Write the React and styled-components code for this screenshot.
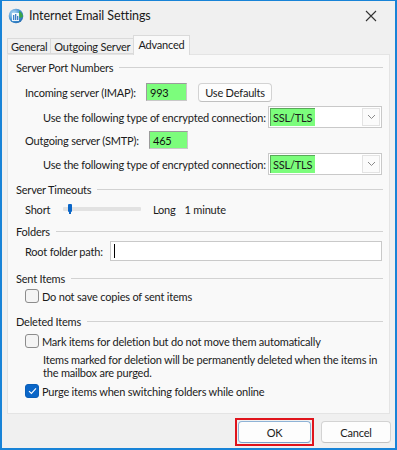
import React from "react";
import styled, { createGlobalStyle } from "styled-components";

const Global = createGlobalStyle`
  html, body { margin: 0; padding: 0; background: #f0f0f0; }
  body { font-family: Lato, "Noto Sans", sans-serif; font-size: 11px; letter-spacing: -0.2px; color: #1b1b1b; }
  * { box-sizing: border-box; }
`;

const Window = styled.div`
  width: 397px;
  height: 450px;
  background: #f0f0f0;
  border: 2px solid #1883d7;
  border-top-width: 1px;
  display: flex;
  flex-direction: column;
  position: relative;
`;

const TitleBar = styled.div`
  height: 29px;
  display: flex;
  align-items: center;
  padding: 0 0 0 6px;
  gap: 5px;
  font-size: 12.5px;
  letter-spacing: -0.1px;
  color: #1a1a1a;
`;

const TitleText = styled.span`
  flex: 1;
`;

const Close = styled.div`
  width: 40px;
  height: 29px;
  display: flex;
  align-items: center;
  justify-content: center;
  margin-right: 4px;
`;

const Tabs = styled.div`
  display: flex;
  align-items: flex-end;
  padding-left: 5px;
  height: 24px;
`;

const Tab = styled.div`
  height: ${p => (p.$active ? "20px" : "16px")};
  padding: 0 ${p => (p.$active ? "4px" : "3px")};
  display: flex;
  align-items: ${p => (p.$active ? "flex-start" : "center")};
  padding-top: ${p => (p.$active ? "2px" : "0")};
  background: ${p => (p.$active ? "#f9f9f9" : "#f0f0f0")};
  border: 1px solid #dadada;
  border-bottom: ${p => (p.$active ? "none" : "1px solid #dadada")};
  margin-right: ${p => (p.$active ? "0" : "-1px")};
  margin-bottom: ${p => (p.$active ? "-1px" : "0")};
  position: relative;
  z-index: ${p => (p.$active ? 2 : 1)};
  color: #1b1b1b;
  white-space: nowrap;
`;

const Panel = styled.div`
  margin: 0 5px 0 5px;
  height: 360px;
  background: #f9f9f9;
  border: 1px solid #e4e4e4;
  padding: 0 6px 0 8px;
  display: flex;
  flex-direction: column;
`;

const Row = styled.div`
  display: flex;
  align-items: center;
  height: ${p => p.$h || 16}px;
  margin-top: ${p => p.$mt || 0}px;
  padding-left: ${p => p.$indent || 0}px;
  white-space: nowrap;
`;

const HeaderText = styled.span`
  margin-right: 6px;
`;

const Rule = styled.div`
  flex: 1;
  height: 1px;
  background: #d2d2d2;
`;

const Label = styled.span`
  width: ${p => (p.$w ? p.$w + "px" : "auto")};
  margin-left: ${p => p.$ml || 0}px;
  flex: none;
`;

const GreenInput = styled.div`
  width: ${p => p.$w}px;
  height: 18px;
  background: #7cfd7c;
  border: 1px solid #9b9b9b;
  border-right-color: #c8c8c8;
  border-bottom-color: #c8c8c8;
  padding-left: 3px;
  display: flex;
  align-items: center;
  color: #111;
`;

const SmallButton = styled.div`
  height: 19px;
  width: 74px;
  margin-left: 11px;
  background: #fdfdfd;
  border: 1px solid #d3d3d3;
  border-bottom-color: #c0c0c0;
  border-radius: 4px;
  display: flex;
  align-items: center;
  justify-content: center;
`;

const Select = styled.div`
  margin-left: auto;
  margin-right: 1px;
  width: 114px;
  height: 22px;
  background: #fff;
  border: 1px solid #c9c9c9;
  display: flex;
  align-items: stretch;
  padding: 1px;
`;

const SelectValue = styled.div`
  width: 45px;
  background: #7cfd7c;
  border: 1px solid #5aa85a;
  border-right: none;
  border-bottom: none;
  display: flex;
  align-items: center;
  padding-left: 2px;
`;

const SelectArrow = styled.div`
  margin-left: auto;
  width: 18px;
  border: 1px solid #e3e3e3;
  background: #fbfbfb;
  display: flex;
  align-items: center;
  justify-content: center;
`;

const SliderTrack = styled.div`
  width: 78px;
  height: 4px;
  background: #e2e2e2;
  border-radius: 1px;
  margin-left: 9px;
  position: relative;
`;

const SliderThumb = styled.div`
  position: absolute;
  left: 5px;
  top: -3px;
  width: 4px;
  height: 8px;
  background: #0a66c8;
  border-radius: 1px;
  &::after {
    content: "";
    position: absolute;
    left: 1px;
    top: 8px;
    width: 2px;
    height: 2px;
    background: #0a66c8;
  }
`;

const TextInput = styled.div`
  flex: 1;
  height: 20px;
  margin-left: 7px;
  margin-right: 1px;
  background: #fff;
  border: 1px solid #c9c9c9;
  display: flex;
  align-items: center;
  padding-left: 3px;
`;

const Caret = styled.div`
  width: 1px;
  height: 14px;
  background: #000;
`;

const Box = styled.div`
  width: 14px;
  height: 14px;
  border-radius: 3px;
  border: 1px solid ${p => (p.$checked ? "#0a5fb8" : "#8c8c8c")};
  background: ${p => (p.$checked ? "#0a66c8" : "#f4f4f4")};
  margin-right: 3px;
  display: flex;
  align-items: center;
  justify-content: center;
  flex: none;
`;

const Note = styled.div`
  margin-top: ${p => p.$mt}px;
  padding-left: 27px;
  line-height: 13px;
  white-space: nowrap;
  color: #1b1b1b;
`;

const Footer = styled.div`
  flex: 1;
  display: flex;
  justify-content: flex-end;
  align-items: flex-start;
  padding: 4px 4px 0 0;
  gap: 7px;
`;

const Highlight = styled.div`
  border: 2px solid #e0141c;
  padding: 1px;
`;

const DialogButton = styled.div`
  width: ${p => p.$w}px;
  height: 22px;
  background: #fdfdfd;
  border: 1px solid ${p => (p.$default ? "#8fb3d6" : "#d3d3d3")};
  border-bottom-color: ${p => (p.$default ? "#7aa3cc" : "#c2c2c2")};
  border-radius: 4px;
  display: flex;
  align-items: center;
  justify-content: center;
  margin-top: ${p => p.$mt || 0}px;
`;

const Check = () => (
  <svg width="9" height="8" viewBox="0 0 9 8">
    <path d="M1 4.2 L3.4 6.4 L8 1.4" fill="none" stroke="#fff" strokeWidth="1.1" />
  </svg>
);

const Chevron = () => (
  <svg width="9" height="6" viewBox="0 0 9 6">
    <path d="M1 1 L4.5 4.5 L8 1" fill="none" stroke="#8a8a8a" strokeWidth="1" />
  </svg>
);

const AppIcon = () => (
  <svg width="16" height="16" viewBox="0 0 16 16">
    <defs>
      <radialGradient id="g" cx="0.35" cy="0.35" r="0.8">
        <stop offset="0" stopColor="#bfe0f7" />
        <stop offset="0.6" stopColor="#3f8fd0" />
        <stop offset="1" stopColor="#1d5fa6" />
      </radialGradient>
    </defs>
    <circle cx="8" cy="8" r="7.3" fill="url(#g)" />
    <path d="M11 3 A7 7 0 0 1 15 9 L11.5 10 Z" fill="#3aa548" />
    <rect x="4" y="5" width="7" height="8" fill="#fff" opacity="0.9" />
    <rect x="5" y="7" width="1.3" height="5" fill="#3f7fc4" />
    <rect x="7" y="6" width="1.3" height="6" fill="#3f7fc4" />
    <rect x="9" y="8" width="1.3" height="4" fill="#3f7fc4" />
  </svg>
);

const CloseIcon = () => (
  <svg width="12" height="12" viewBox="0 0 12 12">
    <path d="M1 1 L11 11 M11 1 L1 11" stroke="#333" strokeWidth="1.1" />
  </svg>
);

export default function App() {
  return (
    <Window>
      <Global />
      <TitleBar>
        <AppIcon />
        <TitleText>Internet Email Settings</TitleText>
        <Close><CloseIcon /></Close>
      </TitleBar>
      <Tabs>
        <Tab>General</Tab>
        <Tab>Outgoing Server</Tab>
        <Tab $active>Advanced</Tab>
      </Tabs>
      <Panel>
        <Row $mt={5} $h={14}>
          <HeaderText>Server Port Numbers</HeaderText>
          <Rule />
        </Row>
        <Row $mt={8} $h={20} $indent={9}>
          <Label $w={121}>Incoming server (IMAP):</Label>
          <GreenInput $w={41}>993</GreenInput>
          <SmallButton>Use Defaults</SmallButton>
        </Row>
        <Row $mt={4} $h={22} $indent={27}>
          <Label>Use the following type of encrypted connection:</Label>
          <Select>
            <SelectValue>SSL/TLS</SelectValue>
            <SelectArrow><Chevron /></SelectArrow>
          </Select>
        </Row>
        <Row $mt={2} $h={20} $indent={9}>
          <Label $w={124}>Outgoing server (SMTP):</Label>
          <GreenInput $w={39}>465</GreenInput>
        </Row>
        <Row $mt={3} $h={22} $indent={27}>
          <Label>Use the following type of encrypted connection:</Label>
          <Select>
            <SelectValue>SSL/TLS</SelectValue>
            <SelectArrow><Chevron /></SelectArrow>
          </Select>
        </Row>
        <Row $mt={7} $h={14}>
          <HeaderText>Server Timeouts</HeaderText>
          <Rule />
        </Row>
        <Row $mt={4} $h={18} $indent={9}>
          <Label $w={29}>Short</Label>
          <SliderTrack><SliderThumb /></SliderTrack>
          <Label $ml={12}>Long</Label>
          <Label $ml={9}>1 minute</Label>
        </Row>
        <Row $mt={6} $h={14}>
          <HeaderText>Folders</HeaderText>
          <Rule />
        </Row>
        <Row $mt={3} $h={20} $indent={9}>
          <Label>Root folder path:</Label>
          <TextInput><Caret /></TextInput>
        </Row>
        <Row $mt={10} $h={14}>
          <HeaderText>Sent Items</HeaderText>
          <Rule />
        </Row>
        <Row $mt={3} $h={16} $indent={9}>
          <Box />
          <Label>Do not save copies of sent items</Label>
        </Row>
        <Row $mt={10} $h={14}>
          <HeaderText>Deleted Items</HeaderText>
          <Rule />
        </Row>
        <Row $mt={5} $h={16} $indent={9}>
          <Box />
          <Label>Mark items for deletion but do not move them automatically</Label>
        </Row>
        <Note $mt={4}>
          Items marked for deletion will be permanently deleted when the items in
          <br />
          the mailbox are purged.
        </Note>
        <Row $mt={4} $h={16} $indent={9}>
          <Box $checked><Check /></Box>
          <Label>Purge items when switching folders while online</Label>
        </Row>
      </Panel>
      <Footer>
        <Highlight>
          <DialogButton $w={73} $default>OK</DialogButton>
        </Highlight>
        <DialogButton $w={70} $mt={3}>Cancel</DialogButton>
      </Footer>
    </Window>
  );
}
